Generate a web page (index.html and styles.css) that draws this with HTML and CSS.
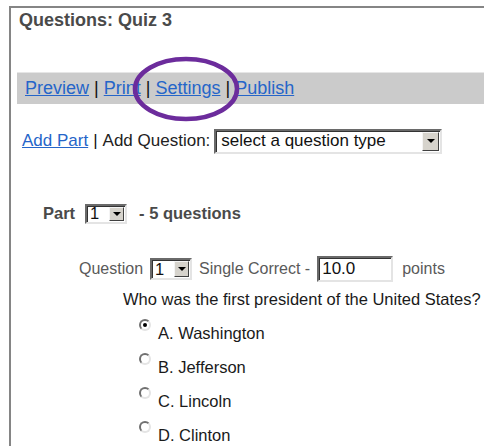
FILE: index.html
```html
<!DOCTYPE html>
<html lang="en">
<head>
<meta charset="utf-8">
<title>Questions: Quiz 3</title>
<link rel="stylesheet" href="styles.css">
</head>
<body>
<div class="frame">
  <h1 class="title">Questions: Quiz 3</h1>

  <div class="toolbar">
    <a href="#">Preview</a><span class="sep">|</span><a href="#">Print</a><span class="sep">|</span><a href="#">Settings</a><span class="sep">|</span><a href="#">Publish</a>
  </div>

  <div class="add-row">
    <a href="#">Add Part</a><span class="sep">|</span><span>Add Question:</span>
    <div class="combo combo-wide">
      <span class="combo-value">select a question type</span>
      <span class="combo-btn"><i class="arrow"></i></span>
    </div>
  </div>

  <div class="part-row">
    <span>Part</span>
    <div class="combo combo-small">
      <span class="combo-value">1</span>
      <span class="combo-btn"><i class="arrow"></i></span>
    </div>
    <span class="count">- 5 questions</span>
  </div>

  <div class="question-row">
    <span>Question</span>
    <div class="combo combo-q">
      <span class="combo-value">1</span>
      <span class="combo-btn"><i class="arrow"></i></span>
    </div>
    <span>Single Correct -</span>
    <div class="points-input">10.0</div>
    <span>points</span>
  </div>

  <p class="prompt">Who was the first president of the United States?</p>

  <ul class="options">
    <li><span class="radio checked"></span><span class="opt-label">A. Washington</span></li>
    <li><span class="radio"></span><span class="opt-label">B. Jefferson</span></li>
    <li><span class="radio"></span><span class="opt-label">C. Lincoln</span></li>
    <li><span class="radio"></span><span class="opt-label">D. Clinton</span></li>
  </ul>

  <!-- highlight ring drawn over the Settings link -->
  <svg class="ring" width="108" height="66" viewBox="0 0 108 66">
    <ellipse cx="54" cy="33" rx="51" ry="30" fill="none" stroke="#6c2c9c" stroke-width="4.5"/>
  </svg>
</div>
</body>
</html>
```

FILE: styles.css
```css
html, body {
  margin: 0;
  padding: 0;
  background: #fff;
  overflow: hidden;
}

body {
  font-family: "Liberation Sans", Arial, sans-serif;
  color: #222;
}

.frame {
  position: relative;
  margin: 6px 0 0 9px;
  height: 460px;
  border-top: 2px solid #858585;
  border-left: 2px solid #858585;
}

.title {
  margin: 0;
  padding: 1px 0 0 8px;
  font-size: 18px;
  line-height: 22px;
  font-weight: bold;
  color: #4a4a4a;
}

a {
  color: #2565c9;
  text-decoration: underline;
}

.sep {
  color: #111;
  padding: 0 5px;
}

/* link strip */
.toolbar {
  margin: 41px 0 0 6px;
  height: 32px;
  box-sizing: border-box;
  border-top: 1px solid #e6e6e6;
  background: #cbcbcb;
  padding-left: 8px;
  display: flex;
  align-items: center;
  font-size: 18px;
}

.add-row {
  margin: 25px 0 0 11px;
  height: 24px;
  display: flex;
  align-items: center;
  font-size: 17px;
  color: #222;
}

.add-row .sep {
  padding: 0 5px;
}

/* classic combo boxes */
.combo {
  display: flex;
  align-items: stretch;
  box-sizing: border-box;
  border: 2px solid;
  border-color: #6a6a6a #e4e4e4 #e4e4e4 #6a6a6a;
  box-shadow: inset 1px 1px 0 #333;
  background: #fff;
}

.combo-value {
  flex: 1;
  display: flex;
  align-items: center;
  padding-left: 5px;
  color: #111;
}

.combo-btn {
  width: 15px;
  margin: 1px;
  box-sizing: border-box;
  background: #d6d3cc;
  border: 1px solid;
  border-color: #f4f4f4 #404040 #404040 #f4f4f4;
  display: flex;
  align-items: center;
  justify-content: center;
}

.arrow {
  width: 0;
  height: 0;
  border-left: 4px solid transparent;
  border-right: 4px solid transparent;
  border-top: 4px solid #000;
}

.combo-wide {
  margin-left: 4px;
  width: 228px;
  height: 25px;
  font-size: 17px;
}

.combo-wide .combo-btn {
  width: 17px;
}

.part-row {
  margin: 51px 0 0 32px;
  height: 19px;
  display: flex;
  align-items: center;
  font-size: 16.5px;
  font-weight: bold;
  color: #4a4a4a;
}

.combo-small {
  margin: 0 12px 0 10px;
  width: 42px;
  height: 20px;
  font-size: 16.5px;
  font-weight: normal;
}

.combo-small .combo-value,
.combo-q .combo-value {
  padding-left: 3px;
}

.question-row {
  margin: 33px 0 0 68px;
  height: 26px;
  display: flex;
  align-items: center;
  gap: 7px;
  font-size: 16px;
  color: #5a5a5a;
}

.combo-q {
  width: 42px;
  height: 22px;
  font-size: 16.5px;
}

.points-input {
  width: 76px;
  height: 26px;
  box-sizing: border-box;
  margin-right: 2px;
  border: 2px solid;
  border-color: #6a6a6a #e4e4e4 #e4e4e4 #6a6a6a;
  box-shadow: inset 1px 1px 0 #333;
  padding-left: 3px;
  display: flex;
  align-items: center;
  font-size: 17px;
  color: #111;
}

.prompt {
  margin: 7px 0 0 112px;
  line-height: 20px;
  font-size: 16.5px;
  color: #1a1a1a;
  white-space: nowrap;
}

.options {
  list-style: none;
  margin: 7px 0 0 128px;
  padding: 0;
}

.options li {
  display: flex;
  align-items: flex-start;
  height: 34px;
}

.radio {
  position: relative;
  width: 12px;
  height: 12px;
  box-sizing: border-box;
  margin-top: 3px;
  border-radius: 50%;
  border: 2px solid;
  border-color: #707070 #e4e4e4 #e4e4e4 #707070;
  background: #fff;
}

.radio.checked::after {
  content: "";
  position: absolute;
  left: 2px;
  top: 2px;
  width: 4px;
  height: 4px;
  border-radius: 50%;
  background: #000;
}

.opt-label {
  margin-left: 7px;
  line-height: 34px;
  font-size: 16.5px;
  color: #1a1a1a;
}

.ring {
  position: absolute;
  left: 121px;
  top: 48px;
  pointer-events: none;
}
```
